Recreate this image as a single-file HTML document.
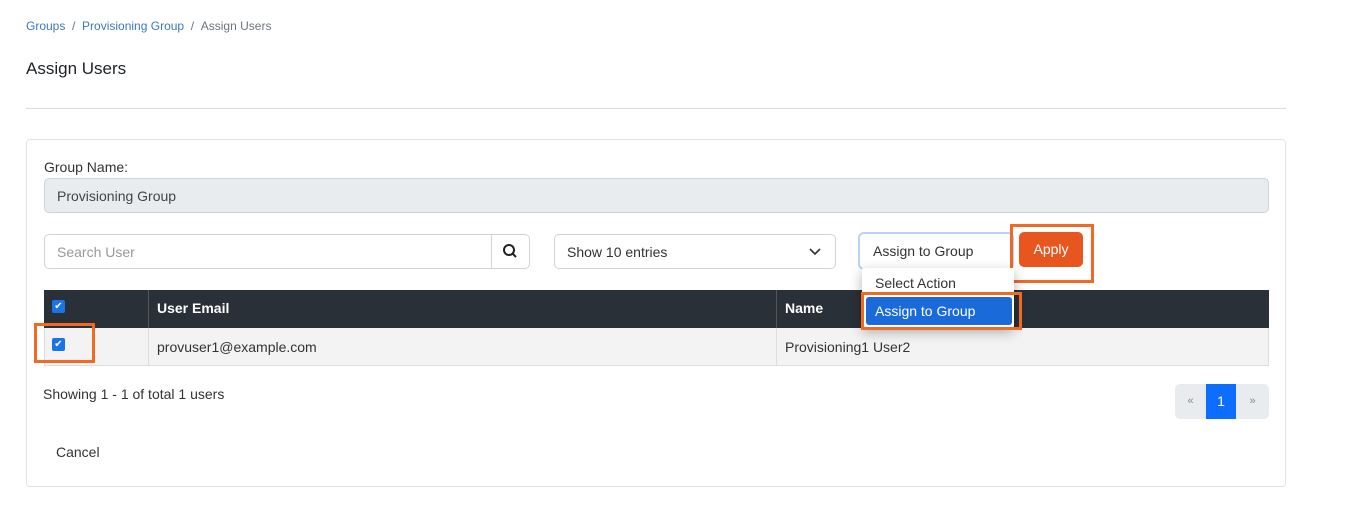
<!DOCTYPE html>
<html><head><style>
*{box-sizing:border-box;margin:0;padding:0}
body{width:1345px;height:507px;background:#fff;font-family:"Liberation Sans",sans-serif;color:#212529;position:relative;overflow:hidden}
.a{position:absolute}
</style></head><body>
<div class="a" style="left:26px;top:19px;font-size:12px;color:#6c757d"><span style="color:#3a7bb8">Groups</span>&nbsp; / &nbsp;<span style="color:#3a7bb8">Provisioning Group</span>&nbsp; / &nbsp;Assign Users</div>
<div class="a" style="left:26px;top:59px;font-size:17px;color:#212529">Assign Users</div>
<div class="a" style="left:26px;top:108px;width:1260px;height:1px;background:#dcdcdc"></div>
<div class="a" style="left:26px;top:139px;width:1260px;height:348px;border:1px solid #e3e3e3;border-radius:4px"></div>
<div class="a" style="left:44px;top:159px;font-size:14px;color:#333">Group Name:</div>
<div class="a" style="left:44px;top:178px;width:1225px;height:35px;background:#e9ecef;border:1px solid #ced4da;border-radius:5px;font-size:14px;padding:9px 12px;color:#444">Provisioning Group</div>
<div class="a" style="left:44px;top:234px;width:448px;height:35px;border:1px solid #ced4da;border-radius:5px 0 0 5px;font-size:14px;padding:9px 12px;color:#999">Search User</div>
<div class="a" style="left:491px;top:234px;width:39px;height:35px;border:1px solid #ced4da;border-radius:0 5px 5px 0"><svg width="37" height="33"><circle cx="17" cy="15" r="5" fill="none" stroke="#222" stroke-width="2"/><line x1="21" y1="19" x2="24" y2="22" stroke="#222" stroke-width="2"/></svg></div>
<div class="a" style="left:554px;top:234px;width:282px;height:35px;border:1px solid #ced4da;border-radius:5px;font-size:14px;padding:9px 12px;color:#333">Show 10 entries<svg class="a" style="right:14px;top:13px" width="12" height="8"><path d="M1 1l5 5 5-5" fill="none" stroke="#333" stroke-width="1.6"/></svg></div>
<div class="a" style="left:858px;top:232px;width:156px;height:38px;border:2px solid #b8d3f5;border-radius:6px;font-size:14px;padding:9px 13px;color:#333">Assign to Group</div>
<div class="a" style="left:1010px;top:224px;width:84px;height:59px;border:3px solid #f06a24"></div>
<div class="a" style="left:1019px;top:232px;width:64px;height:35px;background:#e8561f;border-radius:5px;color:#fff;font-size:14px;text-align:center;line-height:35px">Apply</div>
<div class="a" style="left:44px;top:290px;width:1225px;height:38px;background:#2a3038"></div>
<div class="a" style="left:148px;top:290px;width:1px;height:76px;background:#555"></div>
<div class="a" style="left:776px;top:290px;width:1px;height:76px;background:#555"></div>
<div class="a" style="left:44px;top:328px;width:1225px;height:38px;background:#f3f3f3;border:1px solid #ddd;border-top:none"></div>
<div class="a" style="left:148px;top:328px;width:1px;height:38px;background:#ddd"></div>
<div class="a" style="left:776px;top:328px;width:1px;height:38px;background:#ddd"></div>
<div class="a" style="left:52px;top:300px;width:13px;height:13px;background:#1a73e8;border-radius:2px;color:#fff;font-size:10px;line-height:13px;text-align:center">✔</div>
<div class="a" style="left:157px;top:300px;color:#fff;font-weight:bold;font-size:14px">User Email</div>
<div class="a" style="left:785px;top:300px;color:#fff;font-weight:bold;font-size:14px">Name</div>
<div class="a" style="left:34px;top:323px;width:61px;height:40px;border:3px solid #f06a24"></div>
<div class="a" style="left:52px;top:338px;width:13px;height:13px;background:#1a73e8;border-radius:2px;color:#fff;font-size:10px;line-height:13px;text-align:center">✔</div>
<div class="a" style="left:157px;top:339px;font-size:14px;color:#333">provuser1@example.com</div>
<div class="a" style="left:785px;top:339px;font-size:14px;color:#333">Provisioning1 User2</div>
<div class="a" style="left:862px;top:268px;width:152px;height:60px;background:#fff;box-shadow:0 4px 12px rgba(0,0,0,.3);border-radius:2px"></div>
<div class="a" style="left:875px;top:275px;font-size:14px;color:#333">Select Action</div>
<div class="a" style="left:866px;top:297px;width:146px;height:28px;background:#1a6ad9;border-radius:3px;color:#fff;font-size:14px;padding:6px 9px">Assign to Group</div>
<div class="a" style="left:861px;top:292px;width:161px;height:38px;border:3px solid #f06a24"></div>
<div class="a" style="left:43px;top:386px;font-size:14px;color:#333">Showing 1 - 1 of total 1 users</div>
<div class="a" style="left:1175px;top:384px;width:94px;height:35px;background:#e9ecef;border-radius:5px"></div>
<div class="a" style="left:1206px;top:384px;width:30px;height:35px;background:#0d6efd;color:#fff;font-size:14px;text-align:center;line-height:35px">1</div>
<div class="a" style="left:1175px;top:384px;width:31px;line-height:35px;text-align:center;font-size:11px;color:#888">«</div>
<div class="a" style="left:1236px;top:384px;width:33px;line-height:35px;text-align:center;font-size:11px;color:#888">»</div>
<div class="a" style="left:56px;top:444px;font-size:14px;color:#333">Cancel</div>
</body></html>
